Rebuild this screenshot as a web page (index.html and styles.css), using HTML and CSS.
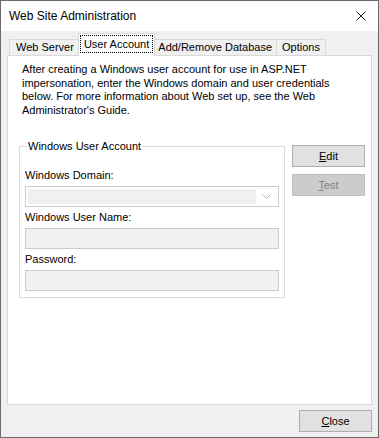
FILE: index.html
```html
<!DOCTYPE html>
<html lang="en">
<head>
  <meta charset="UTF-8" />
  <title>Web Site Administration</title>
  <link rel="stylesheet" href="styles.css">
</head>
<body>
  <div class="window">
    <div class="titlebar">
      <span class="title">Web Site Administration</span>
      <span class="close-x">
        <svg width="10" height="10" viewBox="0 0 10 10"><path d="M0.5 0.5 L9.5 9.5 M9.5 0.5 L0.5 9.5" stroke="#111" stroke-width="1" fill="none"/></svg>
      </span>
    </div>

    <div class="content">
      <div class="tabs">
        <div class="tab">Web Server</div>
        <div class="tab active"><span class="focus">User Account</span></div>
        <div class="tab tab-db">Add/Remove Database</div>
        <div class="tab tab-opt">Options</div>
      </div>

      <div class="panel">
        <p class="intro">After creating a Windows user account for use in ASP.NET impersonation, enter the Windows domain and user credentials below. For more information about Web set up, see the Web Administrator's Guide.</p>

        <div class="row">
          <fieldset class="group">
            <legend>Windows User Account</legend>
            <div class="lbl">Windows Domain:</div>
            <div class="combo">
              <div class="combo-field"></div>
              <div class="combo-arrow">
                <svg width="9" height="5" viewBox="0 0 9 5"><path d="M0.5 0.5 L4.5 4.5 L8.5 0.5" stroke="#b4b4b4" stroke-width="1" fill="none"/></svg>
              </div>
            </div>
            <div class="lbl">Windows User Name:</div>
            <div class="field"></div>
            <div class="lbl">Password:</div>
            <div class="field"></div>
          </fieldset>

          <div class="side">
            <button class="btn"><u>E</u>dit</button>
            <button class="btn disabled"><u>T</u>est</button>
          </div>
        </div>
      </div>

      <div class="footer">
        <button class="btn close"><u>C</u>lose</button>
      </div>
    </div>
  </div>
</body>
</html>
```

FILE: styles.css
```css
/* Fenestra dialogului */
body {
  margin: 0;
  font-family: "Liberation Sans", Arial, sans-serif;
  font-size: 11px;
  color: #000;
  background: #fff;
}
.window {
  width: 379px;
  height: 438px;
  box-sizing: border-box;
  border: 1px solid #6b6b6b;
  display: flex;
  flex-direction: column;
}

/* Bara de titlu */
.titlebar {
  height: 30px;
  background: #fff;
  display: flex;
  align-items: center;
  justify-content: space-between;
  padding: 0 12px 0 8px;
}
.title {
  font-size: 12px;
}
.close-x {
  display: flex;
  margin-top: -1px;
}

/* Zona principala */
.content {
  flex: 1;
  background: #f0f0f0;
  padding: 4px 6px 5px 6px;
  display: flex;
  flex-direction: column;
}

/* Taburi */
.tabs {
  display: flex;
  align-items: flex-end;
  height: 20px;
  padding-left: 2px;
  position: relative;
  z-index: 2;
}
.tab {
  height: 15px;
  line-height: 15px;
  padding: 0 6px;
  background: #f0f0f0;
  border: 1px solid #d9d9d9;
  border-bottom: none;
  margin-right: -1px;
  white-space: nowrap;
}
.tab-db { padding: 0 4px; }
.tab-opt { padding: 0 5px; }
.tab.active {
  height: 21px;
  line-height: 17px;
  background: #fff;
  margin: 0 -1px -1px -2px;
  padding: 1px 1px 0 1px;
  position: relative;
}
.tab.active + .tab {
  margin-left: -1px;
}
.focus {
  display: block;
  border: 1px dotted #000;
  padding: 0 3px;
  height: 16px;
  line-height: 16px;
}

.panel {
  flex: 1;
  background: #fff;
  border: 1px solid #d9d9d9;
  padding: 7px 6px 0 11px;
}
.intro {
  margin: 0;
  padding-left: 3px;
  line-height: 13.6px;
  width: 330px;
}

.row {
  display: flex;
  margin-top: 23px;
  gap: 7px;
}

/* Grup */
.group {
  margin: 0;
  width: 266px;
  box-sizing: border-box;
  min-width: 0;
  border: 1px solid #dcdcdc;
  padding: 16px 5px 6px 5px;
}
.group legend {
  padding: 0 1px;
  margin-left: 2px;
  line-height: 13px;
}
.lbl {
  line-height: 13px;
  margin-bottom: 4px;
}
.combo {
  height: 21px;
  box-sizing: border-box;
  border: 1px solid #cccccc;
  background: #fff;
  display: flex;
  padding: 2px;
  margin-bottom: 4px;
}
.combo-field {
  flex: 1;
  background: #f0f0f0;
}
.combo-arrow {
  width: 20px;
  display: flex;
  align-items: center;
  justify-content: center;
}
.field {
  height: 21px;
  box-sizing: border-box;
  border: 1px solid #cccccc;
  background: #f0f0f0;
  margin-bottom: 4px;
}
.field:last-child {
  margin-bottom: 0;
}

/* Butoane */
.side {
  display: flex;
  flex-direction: column;
  gap: 7px;
  padding-top: 5px;
}
.btn {
  width: 73px;
  height: 22px;
  box-sizing: border-box;
  border: 1px solid #adadad;
  background: #e1e1e1;
  font-family: "Liberation Sans", Arial, sans-serif;
  font-size: 11px;
  color: #000;
  padding: 0;
}
.btn.disabled {
  background: #cccccc;
  border-color: #bfbfbf;
  color: #838383;
}

.footer {
  display: flex;
  justify-content: flex-end;
  padding-top: 5px;
}
```
